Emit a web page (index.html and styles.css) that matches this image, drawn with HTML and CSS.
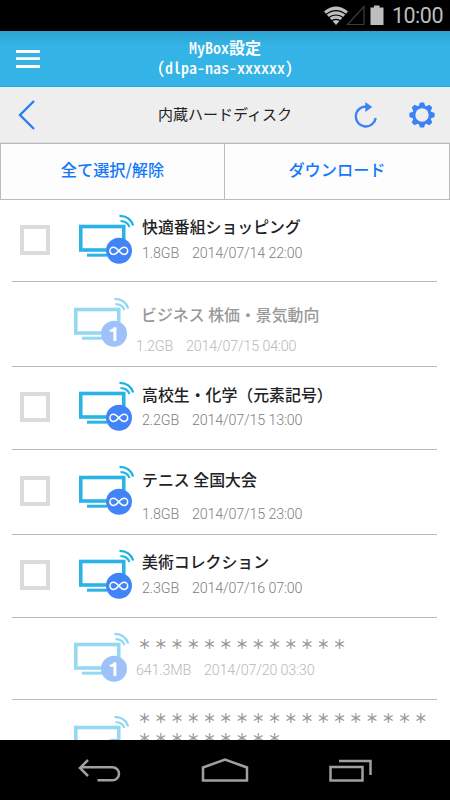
FILE: index.html
```html
<!DOCTYPE html>
<html lang="ja">
<head>
<meta charset="utf-8">
<title>MyBox設定</title>
<link rel="stylesheet" href="styles.css">
</head>
<body>
<svg class="defs" aria-hidden="true">
  <symbol id="tv" viewBox="0 0 56 52">
    <rect x="1.75" y="12.5" width="43" height="23.5" fill="none" stroke="#2cb3e6" stroke-width="3.6"/>
    <path d="M8 41.2H28" stroke="#2cb3e6" stroke-width="3"/>
    <path d="M40.5 1.8C47 1.9 52.300 5.500 54.200 11.500M41.500 7C46 7.100 49.200 9.300 50.400 13" fill="none" stroke="#19b3e6" stroke-width="2.200"/>
    <circle cx="40" cy="36.800" r="13" fill="#4184f7"/>
  </symbol>
  <symbol id="tv-loop" viewBox="0 0 56 52">
    <use href="#tv" width="56" height="52"/>
    <path d="M39.800 36.800C37.500 34 36 33.200 34.500 33.200a3.600 3.600 0 0 0 0 7.200C36 40.400 37.500 39.600 39.800 36.800S43.600 33.200 45.100 33.200a3.600 3.600 0 0 1 0 7.200C43.600 40.400 42.100 39.600 39.800 36.800Z" fill="none" stroke="#fff" stroke-width="1.500"/>
  </symbol>
  <symbol id="tv-once" viewBox="0 0 56 52">
    <use href="#tv" width="56" height="52"/>
    <path d="M39.500 30.200h2.900v13.800h-3v-9.300h-3.700v-2.200c2.100 0 3.400-.7 3.800-2.300Z" fill="#fff"/>
  </symbol>
</svg>
<div class="screen">
  <div class="status">
    <svg width="63" height="22" viewBox="0 0 63 22">
      <path d="M0 6.500Q12 -3.500 24 6.500L12 20Z" fill="#bebebe"/>
      <path d="M1.500 9.800Q12 1.500 22.500 9.800M4 13Q12 7 20 13M7 16.200Q12 12.500 17 16.200" fill="none" stroke="#000" stroke-width="1.200"/>
      <path d="M40 1.500V19.500H23.500Z" fill="none" stroke="#3c3c3c" stroke-width="1.200"/>
      <path d="M46.500 2.500H50V0.500H55.500V2.500H59.500V20H46.500Z" fill="#bebebe"/>
    </svg>
    <span class="clock">10:00</span>
  </div>
  <header class="header">
    <svg class="menu" width="24" height="20" viewBox="0 0 24 20"><path d="M0 2.500H24M0 9.700H24M0 17.500H24" stroke="#fff" stroke-width="2.800"/></svg>
    <div class="title">
      <div class="title-line"><span class="mono">MyBox</span>設定</div>
      <div class="title-line"><span class="mono">(dlpa-nas-xxxxxx)</span></div>
    </div>
  </header>
  <div class="subheader">
    <svg width="18" height="32" viewBox="0 0 18 32"><path d="M16 2L2 16L16 30" fill="none" stroke="#2d7cf0" stroke-width="2.400"/></svg>
    <h1 class="folder">内蔵ハードディスク</h1>
    <div class="tools">
      <svg width="24" height="28" viewBox="0 0 24 28"><path d="M12 5.500A10 10 0 1 0 21.700 17" fill="none" stroke="#3b82f6" stroke-width="2.400"/><path d="M11.300 1L18.200 6L11.300 11Z" fill="#3b82f6"/></svg>
      <svg width="26" height="26" viewBox="-13 -13 26 26"><g fill="#3b82f6"><g id="teeth"><path id="tooth" d="M-3.500 -8.500L-2 -12.600H2L3.500 -8.500V8.500L2 12.600H-2L-3.500 8.500Z"/><use href="#tooth" transform="rotate(90)"/></g><use href="#teeth" transform="rotate(45)"/><circle r="9.600"/></g><circle r="6.700" fill="#eee"/></svg>
    </div>
  </div>
  <div class="actions"><div class="action">全て選択/解除</div><div class="action">ダウンロード</div></div>
  <main class="list">
    <div class="row r1"><span class="check"></span><svg class="icon"><use href="#tv-loop"/></svg><div class="info"><div class="name">快適番組ショッピング</div><div class="meta"><span>1.8GB</span><span>2014/07/14 22:00</span></div></div></div>
    <div class="row r2 dim"><svg class="icon"><use href="#tv-once"/></svg><div class="info"><div class="name">ビジネス 株価・景気動向</div><div class="meta"><span>1.2GB</span><span>2014/07/15 04:00</span></div></div></div>
    <div class="row r3"><span class="check"></span><svg class="icon"><use href="#tv-loop"/></svg><div class="info"><div class="name">高校生・化学（元素記号）</div><div class="meta"><span>2.2GB</span><span>2014/07/15 13:00</span></div></div></div>
    <div class="row r4"><span class="check"></span><svg class="icon"><use href="#tv-loop"/></svg><div class="info"><div class="name">テニス 全国大会</div><div class="meta"><span>1.8GB</span><span>2014/07/15 23:00</span></div></div></div>
    <div class="row r5"><span class="check"></span><svg class="icon"><use href="#tv-loop"/></svg><div class="info"><div class="name">美術コレクション</div><div class="meta"><span>2.3GB</span><span>2014/07/16 07:00</span></div></div></div>
    <div class="row r6 dim"><svg class="icon"><use href="#tv-once"/></svg><div class="info"><div class="name stars">＊＊＊＊＊＊＊＊＊＊＊＊＊</div><div class="meta"><span>641.3MB</span><span>2014/07/20 03:30</span></div></div></div>
    <div class="row r7 dim"><svg class="icon"><use href="#tv-once"/></svg><div class="info"><div class="name stars">＊＊＊＊＊＊＊＊＊＊＊＊＊＊＊＊＊＊<br>＊＊＊＊＊＊＊＊＊</div></div></div>
  </main>
  <nav class="nav">
    <svg width="44" height="26" viewBox="0 0 44 26"><path d="M11 2L3 10L11 18M3 9.200H35.500A6.500 6.500 0 0 1 35.500 22.200H20.500" fill="none" stroke="#a0a0a0" stroke-width="2.500"/></svg>
    <svg width="48" height="26" viewBox="0 0 48 26"><path d="M2 9.500L24 1.500L46 9.500V22.500H2Z" fill="none" stroke="#a0a0a0" stroke-width="2.500"/></svg>
    <svg width="44" height="26" viewBox="0 0 44 26"><path d="M10 3H41.500V17M1.500 9H33.500V22.500H1.500Z" fill="none" stroke="#a0a0a0" stroke-width="2.500"/></svg>
  </nav>
</div>
</body>
</html>
```
FILE: styles.css
```css
* { box-sizing: border-box; }
body { margin: 0; font-family: "Noto Sans CJK JP", sans-serif; background: #fff; }
svg { display: block; flex: none; }
.defs { position: absolute; width: 0; height: 0; }
.screen { width: 450px; height: 800px; display: flex; flex-direction: column; overflow: hidden; }
.status { height: 31px; flex: none; background: #000; display: flex; justify-content: flex-end; align-items: flex-start; padding: 5px 7px 0 0; gap: 5px; }
.clock { font: 21.500px/22px Roboto, sans-serif; color: #bebebe; letter-spacing: -0.5px; }
.header { height: 56px; flex: none; background: linear-gradient(#2fa3d0, #33b3e6 14px); border-bottom: 1px solid #16abe2; display: grid; grid-template-columns: 40px 1fr 40px; align-items: center; }
.menu { margin-left: 16px; }
.title { text-align: center; color: #fff; font-weight: 700; font-size: 16px; margin-top: -3px; }
.title-line { height: 20px; line-height: 20px; }
.mono { font-feature-settings: "hwid"; font-weight: 500; }
.subheader { height: 56px; flex: none; background: #eee; border-bottom: 1px solid #ddd; display: grid; grid-template-columns: 97px 1fr 97px; align-items: center; }
.subheader > svg { margin-left: 18px; }
.folder { margin: -2px 0 0; font-size: 15px; font-weight: 400; color: #222; text-align: center; }
.tools { display: flex; align-items: center; gap: 31px; padding-left: 1px; }
.actions { height: 57px; flex: none; display: grid; grid-template-columns: 224px 1fr; border: 1px solid #bbb; background: #fdfdfd; }
.action { text-align: center; font-size: 16.200px; line-height: 51px; color: #1478fa; font-weight: 500; }
.action:first-child { border-right: 1px solid #bbb; }
.list { flex: 1; min-height: 0; overflow: hidden; padding: 0 13px 0 12px; }
.row { display: flex; align-items: flex-start; border-bottom: 1px solid #bbb; }
.r1 { height: 82px; padding-top: 14px; }
.r2 { height: 85px; padding-top: 15px; }
.r3 { height: 83px; padding-top: 14px; }
.r4 { height: 85px; padding-top: 15px; }
.r5 { height: 83px; padding-top: 14px; }
.r6 { height: 82px; padding-top: 14px; }
.r7 { height: 83px; padding-top: 15px; }
.check { width: 30px; height: 30px; border: 4px solid #dbdbdb; margin: 11px 29px 0 8px; flex: none; }
.icon { width: 56px; height: 52px; }
.dim .icon { margin-left: 62px; opacity: .5; }
.info { margin-left: 7px; white-space: nowrap; padding-top: 1px; }
.name { font-size: 15.900px; line-height: 24px; font-weight: 500; color: #222; }
.meta { display: flex; gap: 13px; font: 300 14.300px/16px Roboto, sans-serif; letter-spacing: -0.17px; color: #808080; margin-top: 6px; }
.r3 .info { padding-top: 2px; }
.r3 .meta { margin-top: 5px; }
.r4 .info { padding-top: 3px; }
.r4 .meta { margin-top: 14px; }
.r2 .info { padding-top: 6px; }
.r2 .meta { margin-top: 11px; }
.dim .name { color: #999; margin-left: 4px; }
.dim .meta { color: #b8b8b8; margin-left: -1px; }
.dim .stars { font-size: 13px; letter-spacing: 3.250px; line-height: 20px; margin-left: 1px; font-weight: 700; }
.r6 .info { padding-top: 2px; }
.r6 .meta { margin-top: 8px; }
.r7 .info { margin-top: -7px; padding-top: 0; }
.nav { height: 60px; flex: none; background: #000; display: flex; justify-content: space-between; align-items: center; padding: 2px 77px 0 77px; }
```
